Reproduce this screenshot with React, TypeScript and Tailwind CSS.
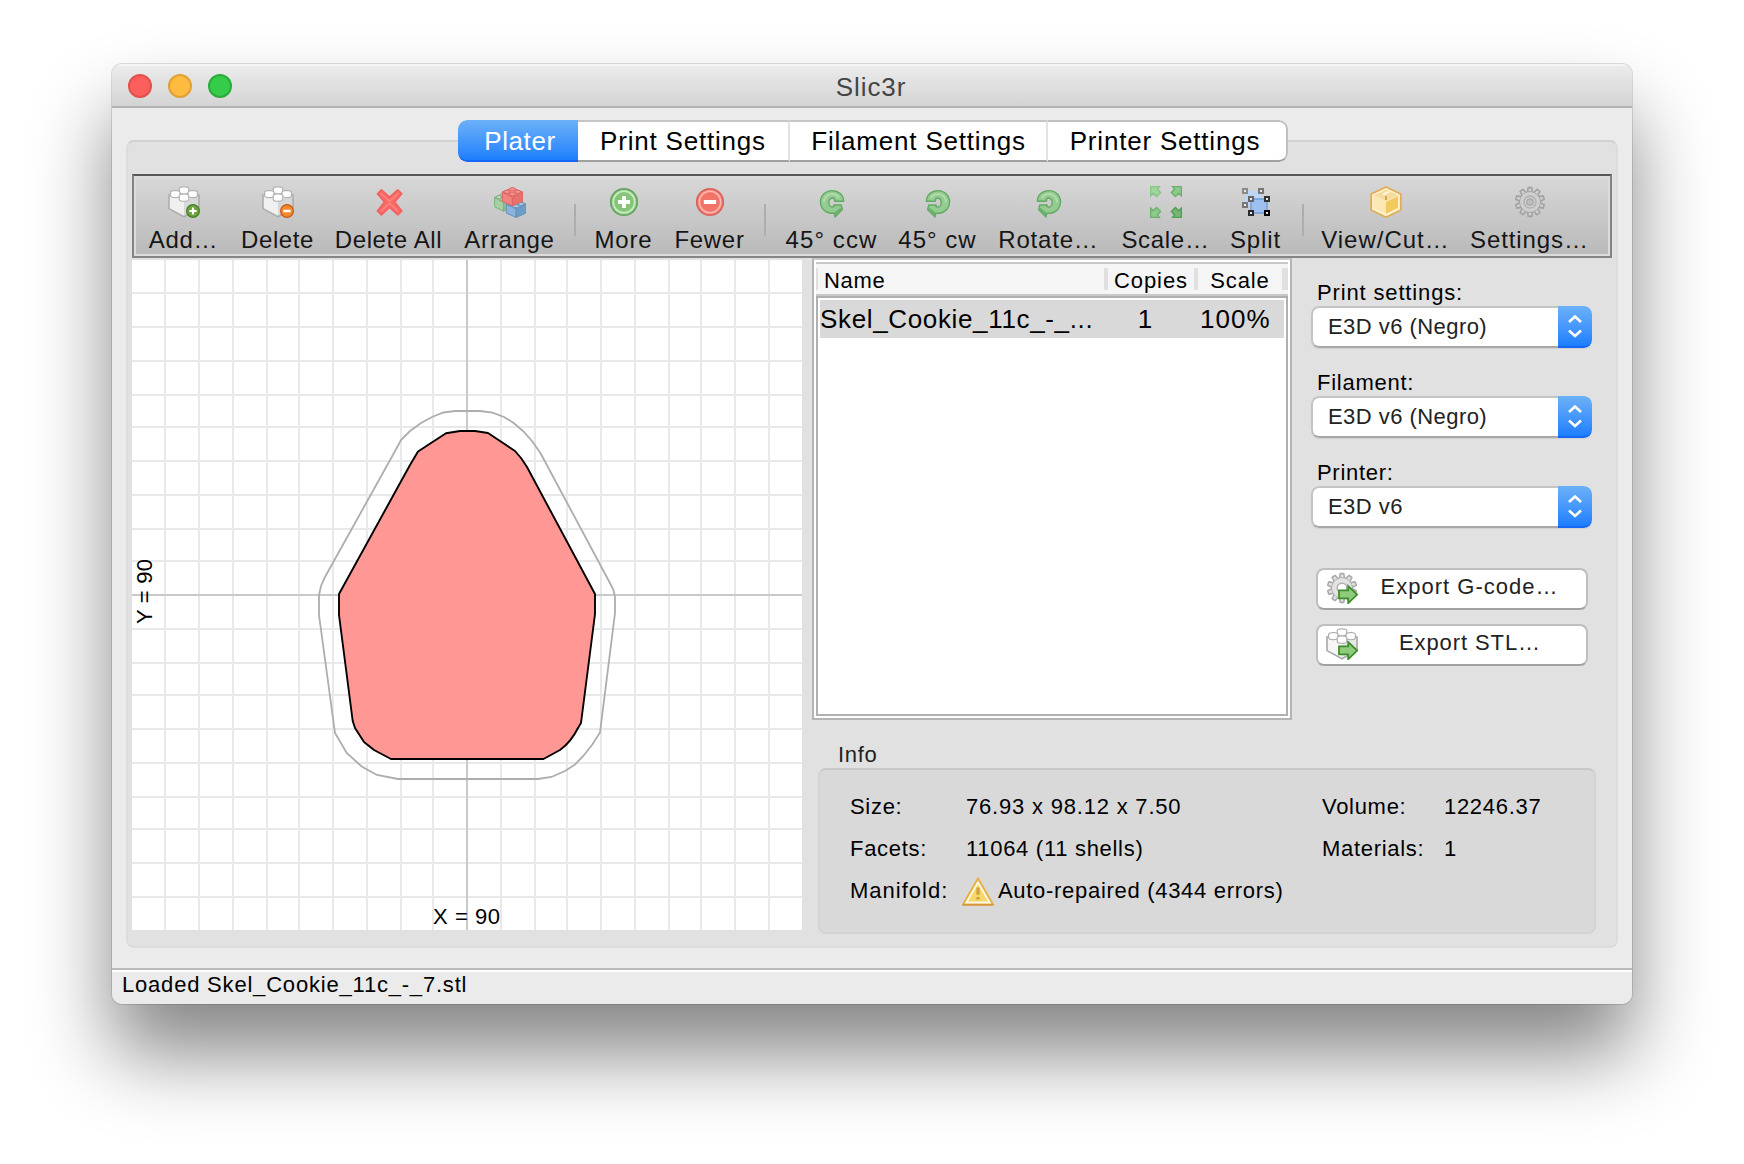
import React from "react";

const Svg = ({ children, className = "size-8" }: { children: React.ReactNode; className?: string }) => (
  <svg viewBox="0 0 16 16" className={className + " shrink-0 block"}>
    {children}
  </svg>
);

const BrickShape = ({ top = "#fdfdfd", left = "#f0f0f0", right = "#d8d8d8", line = "#adadad" }) => (
  <g strokeLinejoin="round" strokeLinecap="round">
    <path d="M.5 4.300 8 7.800V15.400L.5 11.300Z" fill={left} />
    <path d="M15.500 4.300 8 7.800v7.600l7.500-4.100Z" fill={right} />
    <path d="M.5 4.300 8 1l7.500 3.300L8 7.800Z" fill={top} />
    <path d="M8 15.400.5 11.300V4.300M15.500 4.300v7L8 15.400" fill="none" stroke={line} strokeWidth=".8" />
    <g fill={top} stroke={line} strokeWidth=".55">
      <path d="M5.600 1.400v1.600c0 1.300 4.800 1.300 4.800 0V1.400c0-1.300-4.800-1.300-4.800 0Z" />
      <path d="M1.300 3.300v1.500c0 1.400 4.700 1.400 4.700 0V3.300c0-1.300-4.700-1.300-4.700 0Z" />
      <path d="M10 3.300v1.500c0 1.400 4.700 1.400 4.700 0V3.300c0-1.300-4.700-1.300-4.700 0Z" />
      <path d="M5.600 5v1.600c0 1.400 4.800 1.400 4.800 0V5c0-1.300-4.800-1.300-4.800 0Z" />
    </g>
    <g fill="#fff">
      <ellipse cx="8" cy="1.500" rx="1.800" ry=".6" />
      <ellipse cx="3.650" cy="3.400" rx="1.800" ry=".6" />
      <ellipse cx="12.350" cy="3.400" rx="1.800" ry=".6" />
      <ellipse cx="8" cy="5.100" rx="1.800" ry=".6" />
    </g>
  </g>
);

const AddIcon = () => (
  <Svg>
    <BrickShape />
    <circle cx="12.500" cy="12.500" r="3.200" fill="#6aa23f" stroke="#457d25" strokeWidth=".6" />
    <path d="M12.500 10.700v3.600M10.700 12.500h3.600" stroke="#fff" strokeWidth="1.100" />
  </Svg>
);

const DeleteIcon = () => (
  <Svg>
    <BrickShape />
    <circle cx="12.500" cy="12.500" r="3.200" fill="#f08a2c" stroke="#c95a14" strokeWidth=".6" />
    <path d="M10.700 12.500h3.600" stroke="#fff" strokeWidth="1.200" />
  </Svg>
);

const CrossIcon = () => (
  <Svg>
    <path
      d="M4.200 1.900 8.300 5.600l4.100-3.700 2 2L10.900 8l3.500 4.500-2 1.900L8.300 10.700l-4.100 3.700-2-1.900L5.700 8 2.200 3.900Z"
      fill="#fb6a67"
      stroke="#f0625f"
      strokeWidth=".8"
      strokeLinejoin="round"
    />
    <path d="m3.900 3.600 4.400 4 4.400-4M4 12.700l4.300-4.100 4.300 4.100" fill="none" stroke="#ff8583" strokeWidth=".7" />
  </Svg>
);

const Block = ({ light, mid, dark, line }: { light: string; mid: string; dark: string; line: string }) => (
  <g stroke={line} strokeWidth=".5" strokeLinejoin="round">
    <path d="M0 2.500 5 5v4.400L0 7.200Z" fill={mid} />
    <path d="M10 2.500 5 5v4.400L10 7.200Z" fill={dark} />
    <path d="M0 2.500 5 .4l5 2.100L5 5Z" fill={light} />
    <ellipse cx="5" cy="1.200" rx="1.700" ry=".8" fill={light} />
    <ellipse cx="2.400" cy="2.400" rx="1.500" ry=".8" fill={light} />
    <ellipse cx="7.600" cy="2.400" rx="1.500" ry=".8" fill={light} />
    <ellipse cx="5" cy="3.600" rx="1.700" ry=".8" fill={light} />
  </g>
);

const ArrangeIcon = () => (
  <Svg>
    <g transform="translate(.3 3.200) scale(.9 1)">
      <Block light="#bcdcba" mid="#a6d0a3" dark="#8cc08a" line="#7bae79" />
    </g>
    <g transform="translate(6.200 6.600) scale(.97 .97)">
      <Block light="#a9c9e4" mid="#8ab4d9" dark="#6d9dc9" line="#648fb8" />
    </g>
    <g transform="translate(4.200 .5) scale(1 1)">
      <Block light="#f69592" mid="#f4827f" dark="#ea706d" line="#dc6562" />
    </g>
  </Svg>
);

const RoundIcon = ({ kind }: { kind: "plus" | "minus" }) => {
  const plus = kind === "plus";
  return (
    <Svg>
      <circle cx="8" cy="8" r="6.600" fill={plus ? "#a6d79b" : "#f98a80"} stroke={plus ? "#64a560" : "#d9645c"} strokeWidth=".9" />
      <circle cx="8" cy="8" r="5.300" fill={plus ? "#86c578" : "#f27468"} stroke={plus ? "#cbeac4" : "#fbbab2"} strokeWidth=".7" />
      <path d={plus ? "M8 5v6M5 8h6" : "M4.900 8h6.200"} stroke="#fff" strokeWidth="1.900" />
    </Svg>
  );
};

const TurnIcon = ({ flip = false }: { flip?: boolean }) => (
  <Svg>
    <g transform={flip ? "translate(16 0) scale(-1 1)" : undefined}>
      <path
        d="M13.800 7.600C13.800 4.400 11.200 2.300 8 2.300c-3.300 0-5.800 2.500-5.800 5.700 0 3 2.100 5.200 5 5.600h1.900l.4 1.900 3.700-3.700-.6-2.300H8.900l.2.700c-1.300.8-2.700 0-2.700-2 0-1.900 1.500-2.600 2.700-1.900l.2 1.300Z"
        fill="#93cb91"
        stroke="#62aa64"
        strokeWidth=".7"
        strokeLinejoin="round"
      />
      <path d="M4 8.200C4 5.600 5.800 4 8 4c1.800 0 3 .8 3.600 2.200" fill="none" stroke="#b0dbac" strokeWidth=".9" />
      <path d="M9.600 15.200 12.800 11.900l-.2-1.300-3.200 2.600Z" fill="#6cb06d" />
    </g>
  </Svg>
);

const CORNER = "M.3.3H4.700L3.700 1.500 5.300 3.200 3.300 5.200 1.600 3.600.3 4.900Z";

const ScaleIcon = () => (
  <Svg>
    <g strokeWidth=".7">
      <path d={CORNER} fill="#a0d59b" stroke="#86c584" />
      <path d={CORNER} transform="translate(16 0) scale(-1 1)" fill="#8cca89" stroke="#6ab26a" />
      <path d={CORNER} transform="translate(0 16) scale(1 -1)" fill="#8cca89" stroke="#6bb16b" />
      <path d={CORNER} transform="translate(16 16) scale(-1 -1)" fill="#74b873" stroke="#529e55" />
    </g>
  </Svg>
);

const Handle = ({ x, y, c }: { x: number; y: number; c: string }) => (
  <rect x={x - 1} y={y - 1} width="2" height="2" fill="#e8e8e8" stroke={c} strokeWidth="1" />
);

const SplitIcon = () => (
  <Svg>
    <path d="M2.500 2.500h8v7h-8Z" fill="#bdd5f6" />
    <path d="M5.500 6.500h8v7h-8Z" fill="#9dc0ee" stroke="#6f9cdc" strokeWidth=".7" />
    <Handle x={2.5} y={2.5} c="#8a8a8a" />
    <Handle x={10.5} y={2.5} c="#777" />
    <Handle x={2.5} y={9.5} c="#777" />
    <Handle x={5.5} y={6.5} c="#666" />
    <Handle x={13.5} y={6.5} c="#333" />
    <Handle x={5.5} y={13.5} c="#2a2a2a" />
    <Handle x={13.5} y={13.5} c="#000" />
  </Svg>
);

const PackageIcon = () => (
  <Svg>
    <path d="M8 .5 15.400 4v8L8 15.600.6 12V4Z" fill="#fdf0c8" stroke="#e2ac58" strokeWidth=".9" strokeLinejoin="round" />
    <path d="M8 1.900 14 4.600 8 7.600 2 4.600Z" fill="#f5dc9c" />
    <path d="M2 5v6.300l6 3V8Z" fill="#fbe7b4" />
    <path d="M14 5v6.300l-6 3V8Z" fill="#f3c85f" />
    <path d="m6.600 4.300 2.800-1.500" stroke="#fff6dc" strokeWidth="1.100" />
    <path d="M8 7V5" stroke="#c99a4c" strokeWidth=".8" />
    <path d="M2 11.300 8 14.300l6-3" fill="none" stroke="#fff4d2" strokeWidth=".6" />
  </Svg>
);

const TEETH = [0, 36, 72, 108, 144, 180, 216, 252, 288, 324];

const GearShape = ({ fill, line }: { fill: string; line: string }) => (
  <g>
    {TEETH.map((a) => (
      <path
        key={a}
        d="M6.700 3.500 7.100.8h1.800l.4 2.700Z"
        transform={`rotate(${a} 8 8)`}
        fill={fill}
        stroke={line}
        strokeWidth=".8"
        strokeLinejoin="round"
      />
    ))}
    <circle cx="8" cy="8" r="5.200" fill={fill} stroke={line} strokeWidth=".5" />
    <circle cx="8" cy="8" r="4.900" fill={fill} />
  </g>
);

const GearIcon = () => (
  <Svg>
    <GearShape fill="#cfcfcf" line="#a2a2a2" />
    <circle cx="8" cy="8" r="3" fill="none" stroke="#b2b2b2" strokeWidth=".8" />
    <circle cx="8" cy="8" r="1.600" fill="#bebebe" stroke="#a6a6a6" strokeWidth=".6" />
  </Svg>
);

const ExportArrow = () => (
  <path d="M6.500 9.200h4.600V7l4.500 4.300-4.500 4.300v-2.400H6.500Z" fill="#90ca7c" stroke="#3f8e2c" strokeWidth=".9" />
);

const ExportGearIcon = () => (
  <Svg>
    <GearShape fill="#e2e2e2" line="#ababab" />
    <circle cx="8" cy="8" r="2.400" fill="#fff" stroke="#b0b0b0" strokeWidth=".7" />
    <ExportArrow />
  </Svg>
);

const ExportBrickIcon = () => (
  <Svg>
    <BrickShape left="#f6f6f6" right="#e8e8e8" line="#a8a8a8" />
    <ExportArrow />
  </Svg>
);

const WarningIcon = () => (
  <Svg>
    <path d="M8 1.200 15.500 14.200H.5Z" fill="#fffbe8" stroke="#e6b04a" strokeWidth="1" strokeLinejoin="round" />
    <path d="M.3 14.400h15.400" stroke="#dc9438" strokeWidth=".8" />
    <path d="M8 4 13 12.800H3Z" fill="#f6d868" />
    <path d="M8 5.800v3.600M8 10.500v1.300" stroke="#cf9f40" strokeWidth="1.600" />
  </Svg>
);

const Tool = ({ icon, label, className }: { icon: React.ReactNode; label: string; className: string }) => (
  <div className={"flex shrink-0 flex-col items-center pt-2.5 " + className}>
    {icon}
    <span className="-ml-px mt-2 whitespace-nowrap text-[24px] leading-7">{label}</span>
  </div>
);

const Divider = ({ className }: { className: string }) => (
  <div className={"mt-7 h-8 w-0.5 shrink-0 bg-[#adadad] " + className} />
);

const Toolbar = () => (
  <div className="h-[84px] border-2 border-[#858585] border-t-[#585858] bg-linear-to-b from-[#d8d8d8] to-[#b9b9b9] text-[#161616] shadow-[inset_0_0_0_2px_#dcdcdc]">
    <div className="flex pl-1">
      <Tool className="w-[92px] tracking-[0.7px]" icon={<AddIcon />} label="Add…" />
      <Tool className="w-24 tracking-[0.6px]" icon={<DeleteIcon />} label="Delete" />
      <Tool className="w-[126px] tracking-[0.6px]" icon={<CrossIcon />} label="Delete All" />
      <Tool className="w-[116px] tracking-[0.7px]" icon={<ArrangeIcon />} label="Arrange" />
      <Divider className="ml-1.5 mr-2" />
      <Tool className="w-20 tracking-[0.8px]" icon={<RoundIcon kind="plus" />} label="More" />
      <Tool className="w-[92px] tracking-[0.7px]" icon={<RoundIcon kind="minus" />} label="Fewer" />
      <Divider className="ml-2 mr-2.5" />
      <Tool className="w-28 tracking-[1.1px]" icon={<TurnIcon />} label="45° ccw" />
      <Tool className="w-[100px] tracking-[1px]" icon={<TurnIcon flip />} label="45° cw" />
      <Tool className="w-[122px] tracking-[0.8px]" icon={<TurnIcon flip />} label="Rotate…" />
      <Tool className="w-28 tracking-[0.7px]" icon={<ScaleIcon />} label="Scale…" />
      <Tool className="w-[68px] tracking-[0.9px]" icon={<SplitIcon />} label="Split" />
      <Divider className="ml-3 mr-2" />
      <Tool className="w-[148px] tracking-[1px]" icon={<PackageIcon />} label="View/Cut…" />
      <Tool className="w-[140px] tracking-[0.9px]" icon={<GearIcon />} label="Settings…" />
    </div>
  </div>
);

const COLS = [165, 199, 233, 267, 299, 333, 367, 401, 433, 501, 535, 567, 601, 635, 669, 701, 735, 769];
const ROWS = [293, 327, 361, 395, 427, 461, 495, 529, 561, 629, 663, 695, 729, 763, 797, 829, 863, 897];

const Bed = () => (
  <svg viewBox="132 260 670 670" className="mt-0.5 block size-[670px] shrink-0 bg-white">
    <g stroke="#e9e9e9" strokeWidth="2">
      {COLS.map((x) => (
        <path key={x} d={`M${x} 260V930`} />
      ))}
      {ROWS.map((y) => (
        <path key={y} d={`M132 ${y}H802`} />
      ))}
    </g>
    <path d="M467 260V930M132 595H802" stroke="#c9c9c9" strokeWidth="2" />
    <path
      d="M443.500 412.500 455 411H480L492.500 412.700 504 417 513 422.500 523 431 532 441 540.700 453.500 611 585 613.500 590 615 597V613L600 732.500 592 745 583.300 756 575 764.500 565 771 551.500 777 538 779H398L377 775 361.700 766.500 346.700 753 335 733 319 615V595L321 586 325 577 394 453 401 440 410 431 421 423 432 417Z"
      fill="none"
      stroke="#adadad"
      strokeWidth="1.800"
    />
    <path
      d="M446 433.300 460 431H475L488 433 515 451 521 458 527 467 595 594V614L581 723 578 728C573 738 567 745 560 750L543.500 759H391L374 750 364 742 355 728 352.700 721 339 615V594L410 465 418 451.500Z"
      fill="#ff9794"
      stroke="#000"
      strokeWidth="1.900"
      strokeLinejoin="round"
    />
    <g fontSize="22" fill="#000">
      <text x="433" y="924" textLength="67">
        X = 90
      </text>
      <text transform="translate(152 624) rotate(-90)" textLength="65">
        Y = 90
      </text>
    </g>
  </svg>
);

const HeaderRule = ({ className }: { className: string }) => <div className={"h-[22px] shrink-0 bg-[#e0e0e0] " + className} />;

const ObjectList = () => (
  <div className="flex h-[462px] w-[480px] shrink-0 flex-col border-2 border-[#b4b4b4] border-t-[#c6c6c6] bg-white p-0.5">
    <div className="flex h-[34px] shrink-0 items-center border-y-2 border-[#c8c8c8] bg-[#f5f5f5] text-[22px] leading-6">
      <HeaderRule className="w-0.5" />
      <span className="w-[286px] pl-1.5 pt-[3px] tracking-[0.7px]">Name</span>
      <HeaderRule className="w-1" />
      <span className="w-[86px] pt-[3px] text-center tracking-[0.9px]">Copies</span>
      <HeaderRule className="w-1" />
      <span className="w-[84px] pt-[3px] text-center tracking-[0.9px]">Scale</span>
      <HeaderRule className="w-1.5" />
    </div>
    <div className="flex-1 border-2 border-[#b0b0b0] p-0.5">
      <div className="flex h-[38px] w-[464px] items-center bg-[#d9d9d9] text-[26px] leading-[30px]">
        <span className="w-[286px] whitespace-nowrap tracking-[0.65px]">Skel_Cookie_11c_-_...</span>
        <span className="w-[78px] text-center">1</span>
        <span className="w-[100px] pl-4 tracking-[1px]">100%</span>
      </div>
    </div>
  </div>
);

const SelectField = ({ label, value, className }: { label: string; value: string; className: string }) => (
  <div className="flex flex-col gap-px">
    <span className={"pl-1.5 text-[22px] leading-6 " + className}>{label}</span>
    <div className="flex h-[42px] w-[281px] overflow-hidden rounded-lg shadow-[0_1px_1px_rgba(0,0,0,0.08)]">
      <div className="flex flex-1 items-center rounded-l-lg border-2 border-r-0 border-[#c4c4c4] border-b-[#a8a8a8] bg-white pl-[15px] text-[22px] leading-6 tracking-[0.45px] text-[#222]">
        {value}
      </div>
      <div className="flex w-[34px] items-center justify-center rounded-r-lg border-b-2 border-[#1766f5] bg-linear-to-b from-[#6cb1f8] to-[#1b7efd]">
        <svg viewBox="0 0 16 24" className="h-6 w-4">
          <path d="m2 8 6-5.500L14 8M2 16.500 8 22l6-5.500" fill="none" stroke="#fff" strokeWidth="2.600" />
        </svg>
      </div>
    </div>
  </div>
);

const ExportButton = ({ icon, label, className }: { icon: React.ReactNode; label: string; className: string }) => (
  <button className="flex h-[42px] w-[272px] rounded-lg border-2 border-[#bfbfbf] border-b-[#a2a2a2] bg-white pl-2 pt-0.5 text-[#222]">
    {icon}
    <span className={"mt-[3px] flex-1 whitespace-nowrap text-center text-[22px] leading-6 " + className}>{label}</span>
  </button>
);

const SettingsPane = () => (
  <div className="ml-[19px] flex flex-col pt-[23px]">
    <div className="flex flex-col gap-[23px]">
      <SelectField className="tracking-[0.85px]" label="Print settings:" value="E3D v6 (Negro)" />
      <SelectField className="tracking-[0.75px]" label="Filament:" value="E3D v6 (Negro)" />
      <SelectField className="tracking-[0.7px]" label="Printer:" value="E3D v6" />
    </div>
    <div className="ml-[5px] mt-10 flex flex-col gap-3.5">
      <ExportButton className="pr-[5px] tracking-[1px]" icon={<ExportGearIcon />} label="Export G-code…" />
      <ExportButton className="pr-1 tracking-[0.9px]" icon={<ExportBrickIcon />} label="Export STL…" />
    </div>
  </div>
);

const InfoPane = () => (
  <div className="mt-[23px] flex flex-col gap-px pl-1.5 text-[22px] leading-6">
    <span className="pl-5 tracking-[0.7px] text-[#222]">Info</span>
    <div className="grid h-[166px] w-[778px] grid-cols-[116px_356px_122px_auto] content-start gap-y-[18px] rounded-lg border-2 border-[#d3d3d3] border-t-[#c8c8c8] bg-[#d9d9d9] pl-[30px] pt-[25px] tracking-[0.7px]">
      <span>Size:</span>
      <span className="tracking-[0.8px]">76.93 x 98.12 x 7.50</span>
      <span>Volume:</span>
      <span>12246.37</span>
      <span>Facets:</span>
      <span>11064 (11 shells)</span>
      <span>Materials:</span>
      <span>1</span>
      <span className="tracking-[1px]">Manifold:</span>
      <span className="-ml-1 flex h-6 whitespace-nowrap">
        <span className="-mt-[3px]">
          <WarningIcon />
        </span>
        <span className="ml-1">Auto-repaired (4344 errors)</span>
      </span>
    </div>
  </div>
);

const TitleBar = () => (
  <div className="flex h-11 shrink-0 items-center border-b-2 border-[#b2b2b2] bg-linear-to-b from-[#ececec] to-[#d4d4d4] shadow-[inset_0_2px_0_#f5f5f5]">
    <div className="flex gap-4 pl-4 pt-0.5">
      <i className="size-6 rounded-full border-2 border-[#e2504c] bg-[#fd605c]" />
      <i className="size-6 rounded-full border-2 border-[#e0a035] bg-[#fdbc40]" />
      <i className="size-6 rounded-full border-2 border-[#2bac3a] bg-[#35cb4b]" />
    </div>
    <span className="flex-1 pr-[122px] pt-1 text-center text-[26px] leading-[30px] tracking-[0.9px] text-[#454545]">Slic3r</span>
  </div>
);

const TabBar = () => (
  <div className="relative z-10 ml-[346px] mt-3 flex h-[42px] w-[830px] shrink-0 overflow-hidden rounded-[9px] text-[26px] leading-[30px]">
    <div className="flex w-[120px] items-center justify-center rounded-l-[9px] border-b-2 border-[#1766f5] bg-linear-to-b from-[#6cb1f8] to-[#1b7efd] pl-1 pt-0.5 tracking-[0.6px] text-white">
      Plater
    </div>
    <div className="flex w-[212px] items-center justify-center border-y-2 border-r-2 border-y-[#c6c6c6] border-r-[#e2e2e2] border-b-[#a0a0a0] bg-white tracking-[0.8px]">
      Print Settings
    </div>
    <div className="flex w-[258px] items-center justify-center border-y-2 border-r-2 border-y-[#c6c6c6] border-r-[#e2e2e2] border-b-[#a0a0a0] bg-white pl-px tracking-[0.8px]">
      Filament Settings
    </div>
    <div className="flex w-[240px] items-center justify-center rounded-r-[9px] border-2 border-l-0 border-[#c0c0c0] border-b-[#a0a0a0] bg-white pr-1 tracking-[0.8px]">
      Printer Settings
    </div>
  </div>
);

export default function App() {
  return (
    <div className="h-[1164px] w-[1744px] overflow-hidden bg-white pl-28 pt-16 font-['Liberation_Sans',sans-serif] text-black">
      <div className="flex h-[940px] w-[1520px] flex-col overflow-hidden rounded-[10px] bg-[#ebebeb] shadow-[0_50px_80px_rgba(0,0,0,0.48),0_0_0_1px_rgba(0,0,0,0.12)]">
        <TitleBar />
        <TabBar />
        <div className="mx-3.5 -mt-[22px] h-[808px] shrink-0 rounded-lg border-2 border-[#dcdcdc] border-t-[#d2d2d2] bg-[#e1e1e1] px-1 pt-8">
          <Toolbar />
          <div className="flex">
            <Bed />
            <div className="ml-2.5 flex flex-col">
              <div className="flex">
                <ObjectList />
                <SettingsPane />
              </div>
              <InfoPane />
            </div>
          </div>
        </div>
        <div className="mt-5 flex-1 border-t-2 border-[#bcbcbc] bg-[#ebebeb] pl-2.5 pt-[3px] text-[22px] leading-6 tracking-[0.8px] shadow-[inset_0_2px_0_#fff]">
          Loaded Skel_Cookie_11c_-_7.stl
        </div>
      </div>
    </div>
  );
}
